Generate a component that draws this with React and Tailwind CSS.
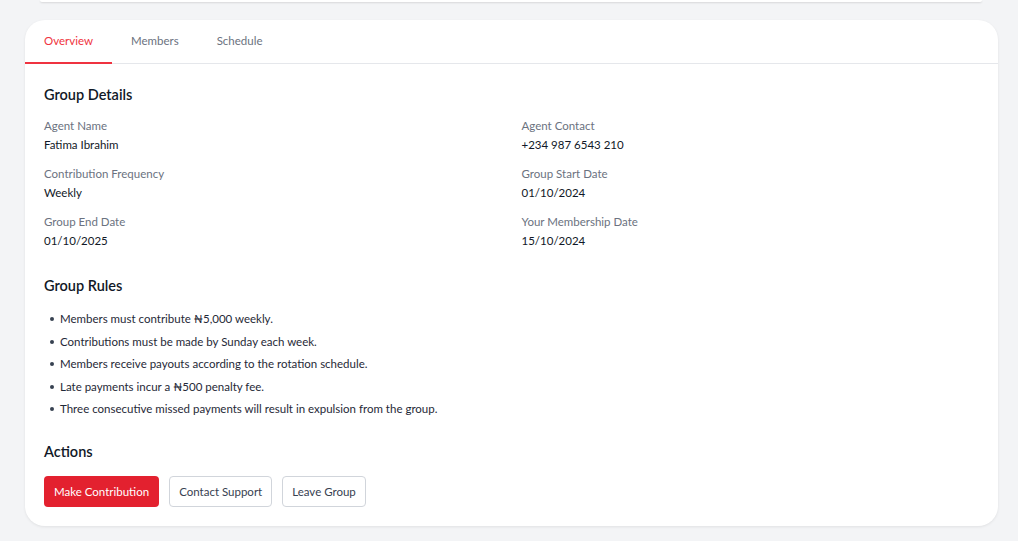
import { useState } from "react";

const details = [
  ["Agent Name", "Fatima Ibrahim"],
  ["Agent Contact", "+234 987 6543 210"],
  ["Contribution Frequency", "Weekly"],
  ["Group Start Date", "01/10/2024"],
  ["Group End Date", "01/10/2025"],
  ["Your Membership Date", "15/10/2024"],
];

const rules = [
  "Members must contribute ₦5,000 weekly.",
  "Contributions must be made by Sunday each week.",
  "Members receive payouts according to the rotation schedule.",
  "Late payments incur a ₦500 penalty fee.",
  "Three consecutive missed payments will result in expulsion from the group.",
];

export default function App() {
  const [tab, setTab] = useState("Overview");

  return (
    <div className="min-h-screen bg-[#f3f4f6] font-['Lato',sans-serif] text-[#111827]">
      {/* bottom edge of the card above */}
      <div className="mx-[40px] mr-[36px] h-[2px] bg-white rounded-b-xl shadow-[0_1px_2px_rgba(0,0,0,0.12)]" />

      <div className="ml-[25px] mr-[20px] mt-[18px] bg-white rounded-[20px] shadow-[0_1px_3px_rgba(0,0,0,0.08)]">
        {/* Tabs */}
        <div className="flex border-b border-[#e5e7eb] h-[44px]">
          {["Overview", "Members", "Schedule"].map((t) => (
            <button
              key={t}
              onClick={() => setTab(t)}
              className={`px-[19px] text-[11.5px] -mb-px border-b-2 ${
                tab === t
                  ? "text-[#ef3340] border-[#ef3340]"
                  : "text-[#6b7280] border-transparent"
              }`}
            >
              {t}
            </button>
          ))}
        </div>

        <div className="px-[19px] pt-[21px] pb-[19px]">
          <h2 className="text-[14.5px] font-semibold leading-[20px]">Group Details</h2>

          <div className="grid grid-cols-2 gap-x-[20px] gap-y-[13px] mt-[13px]">
            {details.map(([label, value]) => (
              <div key={label}>
                <div className="text-[11.5px] leading-[16px] text-[#6b7280]">{label}</div>
                <div className="text-[11.5px] leading-[16px] mt-[3px] text-[#111827]">{value}</div>
              </div>
            ))}
          </div>

          <h2 className="text-[14.5px] font-semibold leading-[20px] mt-[27px]">Group Rules</h2>
          <ul className="mt-[15px] flex flex-col gap-[6.5px]">
            {rules.map((r) => (
              <li key={r} className="flex items-center text-[11.5px] leading-[16px] text-[#1f2937]">
                <span className="w-[4px] h-[4px] rounded-full bg-[#374151] ml-[6px] mr-[6px]" />
                {r}
              </li>
            ))}
          </ul>

          <h2 className="text-[14.5px] font-semibold leading-[20px] mt-[25px]">Actions</h2>
          <div className="flex gap-[10px] mt-[14px]">
            <button className="h-[31px] px-[10px] rounded-[4px] bg-[#e3212f] text-white text-[11.5px]">
              Make Contribution
            </button>
            <button className="h-[31px] px-[9px] rounded-[4px] border border-[#d1d5db] text-[#374151] text-[11.5px]">
              Contact Support
            </button>
            <button className="h-[31px] px-[9px] rounded-[4px] border border-[#d1d5db] text-[#374151] text-[11.5px]">
              Leave Group
            </button>
          </div>
        </div>
      </div>
    </div>
  );
}
